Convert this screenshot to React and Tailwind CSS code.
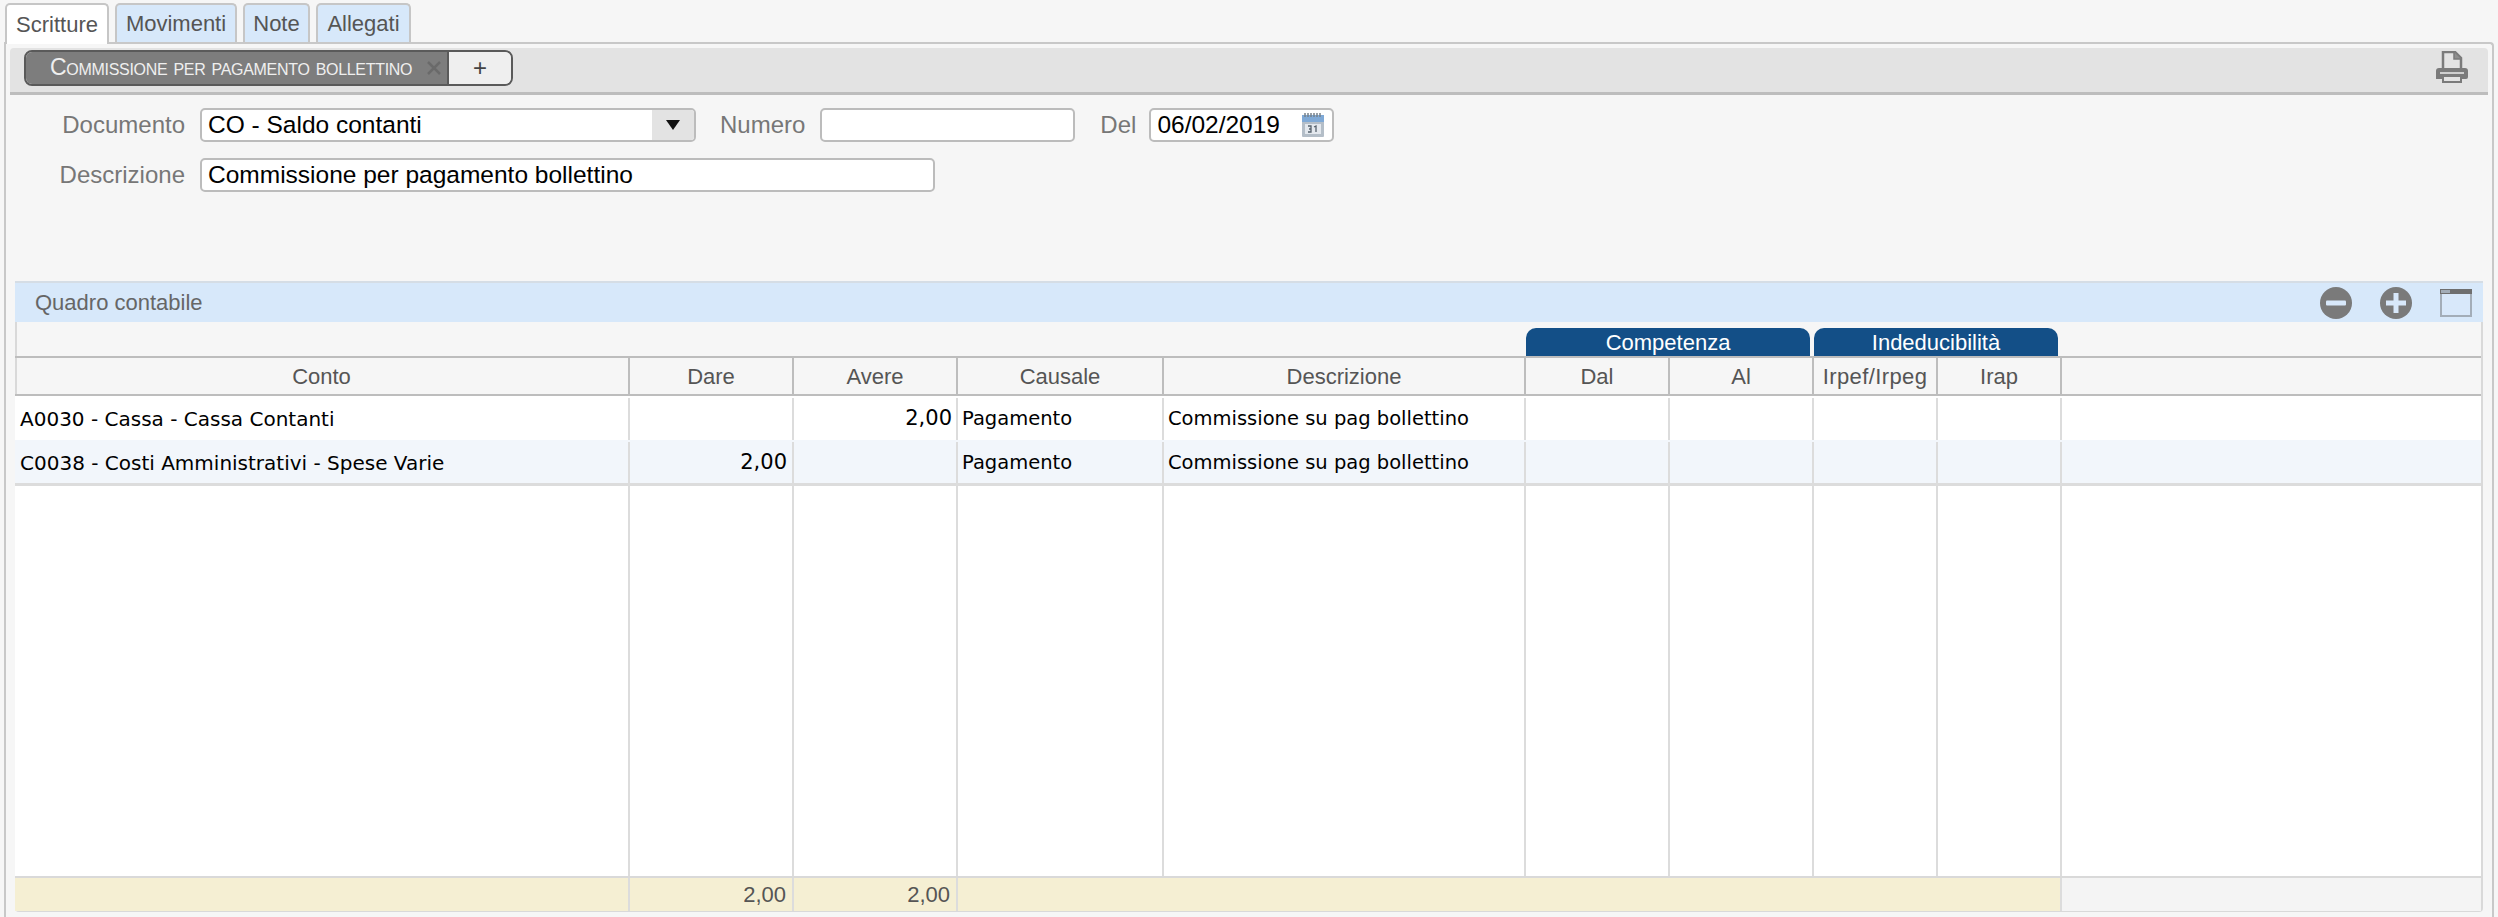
import React from 'react';

const gridCols = 'grid grid-cols-[615px_164px_164px_206px_362px_144px_144px_124px_124px_1fr]';

const tabs = [
  { label: 'Scritture', width: 'w-[104px]', active: true },
  { label: 'Movimenti', width: 'w-[122px]' },
  { label: 'Note', width: 'w-[67px]' },
  { label: 'Allegati', width: 'w-[95px]' },
];

const columns = ['Conto', 'Dare', 'Avere', 'Causale', 'Descrizione', 'Dal', 'Al', 'Irpef/Irpeg', 'Irap', ''];

const rows = [
  { conto: 'A0030 - Cassa - Cassa Contanti', dare: '', avere: '2,00', causale: 'Pagamento', descrizione: 'Commissione su pag bollettino' },
  { conto: 'C0038 - Costi Amministrativi - Spese Varie', dare: '2,00', avere: '', causale: 'Pagamento', descrizione: 'Commissione su pag bollettino', alt: true },
];

const PrinterIcon = () => (
  <svg width="32" height="32" viewBox="0 0 32 32">
    <path d="M7 18V1H19L25 7V18" fill="none" stroke="#7b7b7b" strokeWidth="2.500" />
    <path d="M18 1V8H25" fill="#8f8f8f" stroke="#7b7b7b" strokeWidth="1.500" />
    <path d="M3 17H29Q32 17 32 20V26Q32 28 30 28H0V20Q0 17 3 17Z" fill="#7b7b7b" />
    <rect x="4" y="21" width="24" height="2" fill="#cfcfcf" />
    <path d="M7 25H25V31H7Z" fill="#e3e3e3" stroke="#7b7b7b" strokeWidth="2" />
  </svg>
);

const MinusIcon = () => (
  <svg width="32" height="32" viewBox="0 0 32 32">
    <circle cx="16" cy="16" r="16" fill="#7a7a7a" />
    <rect x="6" y="13.500" width="20" height="5" rx="1" fill="#d8e8fa" />
  </svg>
);

const PlusIcon = () => (
  <svg width="32" height="32" viewBox="0 0 32 32">
    <circle cx="16" cy="16" r="16" fill="#7a7a7a" />
    <path d="M13.500 6H18.500V13.500H26V18.500H18.500V26H13.500V18.500H6V13.500H13.500Z" fill="#d8e8fa" />
  </svg>
);

const WindowIcon = () => (
  <svg width="32" height="28" viewBox="0 0 32 28">
    <rect x="1" y="1" width="30" height="26" fill="#d8e8fa" stroke="#a3adb8" strokeWidth="2" />
    <rect x="0" y="0" width="32" height="5" fill="#6f6f6f" />
    <rect x="1" y="1" width="9" height="3" fill="#a3adb8" />
  </svg>
);

const CalendarIcon = () => (
  <svg width="22" height="24" viewBox="0 0 22 24">
    <rect x="0" y="2" width="22" height="22" rx="1" fill="#b4bec8" />
    <rect x="0" y="2" width="22" height="7" fill="#7fa9d6" />
    <path d="M3 0V4M6 0V4M9 0V4M12 0V4M15 0V4M18 0V4" stroke="#77818b" strokeWidth="1.500" />
    <rect x="3" y="11" width="16" height="10" fill="#e3e8ee" />
    <path d="M6 13H9V16H7M9 16V19H6M12 14L14 13V19" fill="none" stroke="#56616c" strokeWidth="1.300" />
  </svg>
);

const inputClass = 'h-[34px] bg-white border-2 border-[#bcbcbc] rounded-[5px] flex items-center text-[24.5px] text-black';

const App = () => {
  return (
    <div className="h-[917px] overflow-hidden bg-[#f6f6f6] pt-[3px] font-['Liberation_Sans',Arial,sans-serif] text-[22px]">
      {/* Tabs */}
      <div className="flex gap-[6px] pl-[5px] h-[39px]">
        {tabs.map((tab) => (
          <div
            key={tab.label}
            className={`${tab.width} relative z-10 flex items-center justify-center rounded-t-[5px] border-2 border-b-0 border-[#c6c6c6] text-[#555] ${
              tab.active ? 'h-[41px] bg-white' : 'h-[39px] bg-[#d7e8fa]'
            }`}
          >
            {tab.label}
          </div>
        ))}
      </div>

      <div className="mx-[4px] h-[880px] border-x-2 border-t-2 border-[#c8c8c8] rounded-tr-[4px] pt-[4px]">
        {/* Toolbar */}
        <div className="mx-[4px] h-[47px] flex items-center justify-between bg-[#e3e3e3] border-b-[3px] border-[#bdbdbd] rounded-t-[4px] pl-[14px] pr-[20px]">
          <div className="flex h-[36px] w-[489px] rounded-[8px] border-2 border-[#5a5a5a] overflow-hidden -mt-[5px]">
            <div className="w-[423px] flex items-center bg-[#7d7d7d] border-r-2 border-[#5a5a5a] pl-[24px] text-[#efefef] text-[23px] tracking-[-0.3px] whitespace-nowrap [font-variant:small-caps]">
              <span className="w-[377px] shrink-0">Commissione per pagamento bollettino</span>
              <svg className="shrink-0" width="14" height="14" viewBox="0 0 14 14">
                <path d="M1 1L13 13M13 1L1 13" stroke="#6a6a6a" strokeWidth="2.500" />
              </svg>
            </div>
            <div className="flex-1 flex items-center justify-center bg-[#efefef] text-[#444] text-[24px]">+</div>
          </div>
          <div className="-mt-[6px]">
            <PrinterIcon />
          </div>
        </div>

        {/* Form */}
        <div className="pt-[13px]">
          <div className="flex items-center h-[34px]">
            <div className="w-[179px] text-right text-[24px] text-[#777]">Documento</div>
            <div className={`${inputClass} ml-[15px] w-[496px] overflow-hidden`}>
              <div className="flex-1 pl-[6px]">CO - Saldo contanti</div>
              <div className="w-[42px] h-full flex items-center justify-center bg-[#e3e3e3]">
                <svg width="16" height="10" viewBox="0 0 16 10">
                  <path d="M1 0H15L8 10Z" fill="#111" />
                </svg>
              </div>
            </div>
            <div className="ml-[24px] text-[24px] text-[#777]">Numero</div>
            <div className={`${inputClass} ml-[15px] w-[255px]`} />
            <div className="ml-[25px] text-[24px] text-[#777]">Del</div>
            <div className={`${inputClass} ml-[13px] w-[185px] justify-between pl-[6px] pr-[8px]`}>
              <span>06/02/2019</span>
              <CalendarIcon />
            </div>
          </div>
          <div className="flex items-center h-[34px] mt-[16px]">
            <div className="w-[179px] text-right text-[24px] text-[#777]">Descrizione</div>
            <div className={`${inputClass} ml-[15px] w-[735px] pl-[6px]`}>Commissione per pagamento bollettino</div>
          </div>
        </div>

        {/* Quadro contabile */}
        <div className="mt-[89px] ml-[9px] w-[2468px] border-x-2 border-b-2 border-[#d9d9d9] rounded-b-[4px]">
          <div className="h-[41px] flex items-center justify-between bg-[#d7e8fa] border-t-2 border-[#d5dde5] -mx-[2px] pl-[20px] pr-[11px] text-[#666]">
            <span>Quadro contabile</span>
            <div className="flex items-center gap-[28px]">
              <MinusIcon />
              <PlusIcon />
              <WindowIcon />
            </div>
          </div>

          <div className={`${gridCols} h-[34px] items-end -ml-[2px]`}>
            <div className="col-start-6 col-span-2 h-[28px] mr-[4px] flex items-center justify-center rounded-t-[10px] bg-[#134f87] text-white">
              Competenza
            </div>
            <div className="col-span-2 h-[28px] mr-[4px] flex items-center justify-center rounded-t-[10px] bg-[#134f87] text-white">
              Indeducibilità
            </div>
          </div>

          <div className={`${gridCols} h-[40px] -ml-[2px] border-y-2 border-[#bdbdbd] text-[#555]`}>
            {columns.map((col, i) => (
              <div
                key={i}
                className={`flex items-center justify-center whitespace-nowrap ${i < 9 ? 'border-r-2 border-[#bdbdbd]' : ''} ${
                  col === 'Irpef/Irpeg' ? 'tracking-[0.4px]' : ''
                }`}
              >
                {col}
              </div>
            ))}
          </div>

          {rows.map((row) => (
            <div
              key={row.conto}
              className={`${gridCols} -ml-[2px] pt-[2px] font-['DejaVu_Sans',sans-serif] text-[19.5px] text-black ${
                row.alt ? 'h-[46px] border-b-[3px] border-[#dcdcdc] bg-[#f2f6fb]' : 'h-[44px] bg-white'
              }`}
            >
              <div className="flex items-center pl-[5px] border-r-2 border-[#dcdcdc] whitespace-nowrap text-[20px]">{row.conto}</div>
              <div className="flex items-center justify-end pr-[5px] border-r-2 border-[#dcdcdc] text-[21px]">{row.dare}</div>
              <div className="flex items-center justify-end pr-[4px] border-r-2 border-[#dcdcdc] text-[21px]">{row.avere}</div>
              <div className="flex items-center pl-[4px] border-r-2 border-[#dcdcdc]">{row.causale}</div>
              <div className="flex items-center pl-[4px] border-r-2 border-[#dcdcdc] whitespace-nowrap">{row.descrizione}</div>
              {[0, 1, 2, 3].map((n) => (
                <div key={n} className="border-r-2 border-[#dcdcdc]" />
              ))}
              <div />
            </div>
          ))}

          {/* Empty area */}
          <div className={`${gridCols} h-[390px] -ml-[2px] bg-white`}>
            {[0, 1, 2, 3, 4, 5, 6, 7, 8].map((n) => (
              <div key={n} className="border-r-2 border-[#dcdcdc]" />
            ))}
            <div />
          </div>

          {/* Totals */}
          <div className={`${gridCols} h-[34px] -ml-[2px] border-t-2 border-[#d9d9d9] text-[#555]`}>
            <div className="bg-[#f5efd3] border-r-2 border-[#dcdcdc]" />
            <div className="flex items-center justify-end pr-[6px] bg-[#f5efd3] border-r-2 border-[#dcdcdc]">2,00</div>
            <div className="flex items-center justify-end pr-[6px] bg-[#f5efd3] border-r-2 border-[#dcdcdc]">2,00</div>
            <div className="col-span-6 bg-[#f5efd3] border-r-2 border-[#dcdcdc]" />
            <div className="bg-[#f4f4f4]" />
          </div>
        </div>
      </div>
    </div>
  );
};

export default App;
